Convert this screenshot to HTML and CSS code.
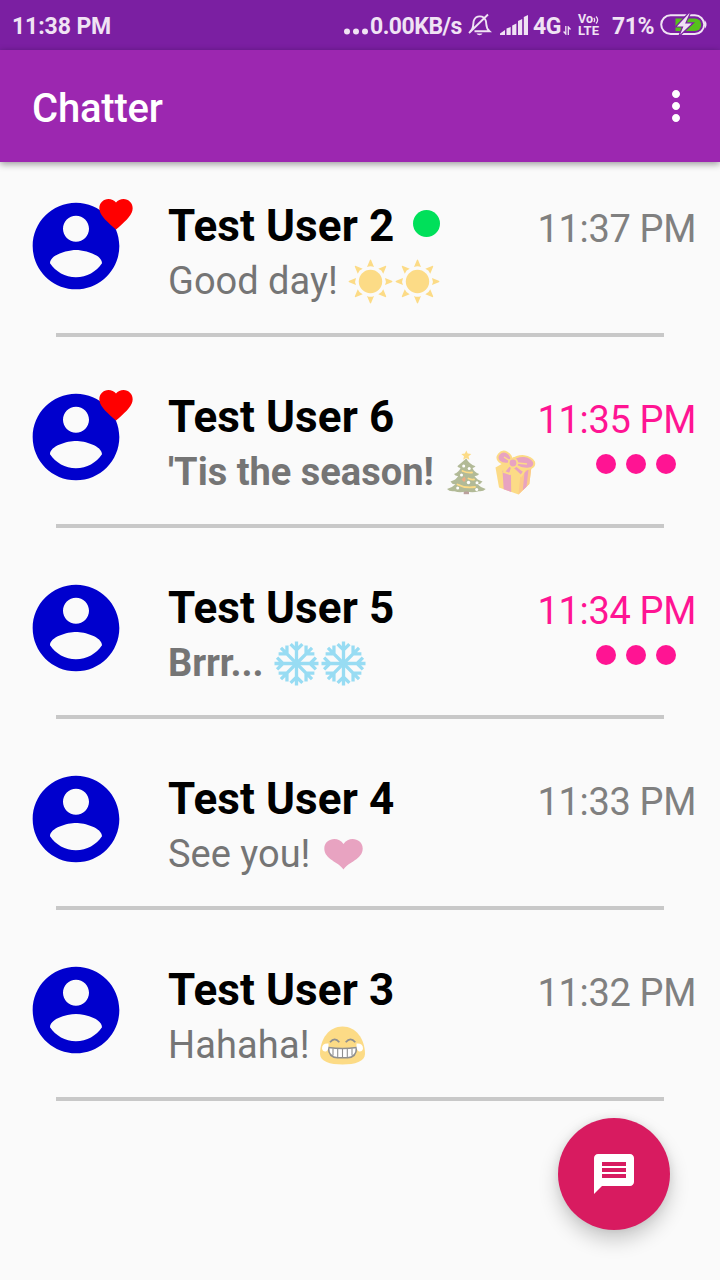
FILE: index.html
```html
<!DOCTYPE html>
<html lang="en">
<head>
<meta charset="utf-8">
<title>Chatter</title>
<link rel="stylesheet" href="styles.css">
</head>
<body>
<svg class="defs" aria-hidden="true">
  <symbol id="account" viewBox="0 0 24 24"><path d="M12 2C6.48 2 2 6.48 2 12s4.48 10 10 10 10-4.48 10-10S17.52 2 12 2zm0 3c1.66 0 3 1.34 3 3s-1.34 3-3 3-3-1.34-3-3 1.34-3 3-3zm0 14.2c-2.5 0-4.71-1.28-6-3.22.03-1.99 4-3.08 6-3.08 1.99 0 5.97 1.09 6 3.08-1.29 1.94-3.5 3.22-6 3.22z"/></symbol>
  <symbol id="favorite" viewBox="0 0 24 24"><path d="M12 21.35l-1.45-1.32C5.4 15.36 2 12.28 2 8.5 2 5.42 4.42 3 7.5 3c1.74 0 3.41.81 4.5 2.09C13.09 3.81 14.76 3 16.5 3 19.58 3 22 5.42 22 8.5c0 3.78-3.4 6.86-8.55 11.54L12 21.35z"/></symbol>
  <symbol id="sun" viewBox="-23.5 -23.5 47 47">
    <g fill="#fcdb86"><circle r="11.7"/>
      <path id="ray" d="M-3.5-14.5L-.7-21.300Q0-22.800.7-21.300L3.500-14.500Q0-16.200-3.500-14.500z"/>
      <use href="#ray" transform="rotate(45)"/><use href="#ray" transform="rotate(90)"/><use href="#ray" transform="rotate(135)"/><use href="#ray" transform="rotate(180)"/><use href="#ray" transform="rotate(225)"/><use href="#ray" transform="rotate(270)"/><use href="#ray" transform="rotate(315)"/></g>
  </symbol>
  <symbol id="snow" viewBox="-23.5 -23.5 47 47">
    <g fill="none" stroke="#98dcf3" stroke-width="3.3" stroke-linecap="butt">
      <path id="arm" d="M0 0V-22M-5.900-19.400L0-13.500L5.900-19.400"/>
      <use href="#arm" transform="rotate(45)"/><use href="#arm" transform="rotate(90)"/><use href="#arm" transform="rotate(135)"/><use href="#arm" transform="rotate(180)"/><use href="#arm" transform="rotate(225)"/><use href="#arm" transform="rotate(270)"/><use href="#arm" transform="rotate(315)"/></g>
  </symbol>
</svg>

<header class="status">
  <span class="status-clock">11:38 PM</span>
  <svg class="more-notes" viewBox="0 0 24 7" fill="currentColor"><circle cx="3" cy="3.5" r="3"/><circle cx="12" cy="3.5" r="3"/><circle cx="21" cy="3.5" r="3"/></svg>
  <span class="status-speed">0.00KB/s</span>
  <svg class="bell" viewBox="0 0 24 24" fill="none" stroke="currentColor" stroke-width="1.900"><path d="M2.300 18.300C6.500 15 4.600 10 6 7.200A6.300 6.300 0 0 1 17.700 7.500C19 11 17 14.500 21.500 18.300H6.500M1 20L20 1.500"/><path d="M8.500 20.500a3.200 2.500 0 0 0 6 0z" fill="currentColor" stroke="none"/></svg>
  <svg class="signal" viewBox="0 0 28 20" fill="currentColor"><path d="M0 20v-1.500L5 15V20zM6.500 13.500l4.200-1.500V20H6.500zM12.200 10.500l4.200-2V20h-4.200zM18 6l4.200-2V20H18zM23.800 2L28 0V20h-4.200z"/></svg>
  <span class="status-net">4G</span>
  <svg class="arrows" viewBox="0 0 8 9" fill="none" stroke="currentColor" stroke-width="1.300"><path d="M2.800 0V8L.6 5.500M5.300 9V1L7.500 3.500"/></svg>
  <span class="volte"><span class="vo">Vo<svg class="waves" viewBox="0 0 6 8" fill="none" stroke="currentColor" stroke-width="1.200"><path d="M.8 2Q2.500 4 .8 6M3 .5Q6.300 4 3 7.500"/></svg></span><span class="lte">LTE</span></span>
  <span class="status-pct">71%</span>
  <svg class="battery" viewBox="0 0 48 24"><rect x="1.200" y="2.200" width="43" height="18.800" rx="9.400" fill="none" stroke="#f0e3f4" stroke-width="2"/><path d="M45 7.500q3 4 0 8z" fill="#f0e3f4"/><path d="M15.500 5.500H35a6.200 6.200 0 0 1 0 12.500H15.500z" fill="#56c11c"/><path d="M28.500 0L15.500 14h7L18.500 24 33.500 9.800h-7.500L30.500 0z" fill="#f0e3f4" stroke="#7b1fa2" stroke-width="1.200"/></svg>
</header>

<nav class="toolbar">
  <h1>Chatter</h1>
  <svg class="menu" viewBox="0 0 24 24" fill="#fff"><path d="M12 8c1.100 0 2-.9 2-2s-.9-2-2-2-2 .9-2 2 .9 2 2 2zm0 2c-1.100 0-2 .9-2 2s.9 2 2 2 2-.9 2-2-.9-2-2-2zm0 6c-1.100 0-2 .9-2 2s.9 2 2 2 2-.9 2-2-.9-2-2-2z"/></svg>
</nav>

<main class="chats">
  <article class="chat">
    <div class="avatar"><svg class="face"><use href="#account"/></svg><svg class="fav"><use href="#favorite"/></svg></div>
    <div class="body">
      <h2>Test User 2<i class="online"></i></h2>
      <p class="msg"><span class="words">Good day! </span><svg class="emoji"><use href="#sun"/></svg><svg class="emoji"><use href="#sun"/></svg></p>
    </div>
    <div class="meta"><time>11:37 PM</time></div>
  </article>

  <article class="chat unread">
    <div class="avatar"><svg class="face"><use href="#account"/></svg><svg class="fav"><use href="#favorite"/></svg></div>
    <div class="body">
      <h2>Test User 6</h2>
      <p class="msg"><span class="words">'Tis the season! </span><svg class="emoji" viewBox="0 0 47 47">
        <path d="M20.700 40h5.300v5.200h-5.300z" fill="#bba19d"/>
        <path d="M23.300 9.500Q26 15 32.500 17.200 31 19 29.500 19 31 23 36.200 25 34 27.500 31.500 27 34 31 39.500 32.500 37.500 35.500 34.500 35.300 37.500 38.500 42.700 40 40 43 35.500 42.200 29 44.500 23.300 42.200 17 44.500 11.500 42.200 6.500 43 4 40 9.500 38.500 12.500 35.300 9 35.500 7.500 32.500 13 31 15.200 27 12.500 27.500 11 25 16 23 17.500 19 15.500 19 14.300 17.200 21 15z" fill="#b2ba97"/>
        <g fill="none" stroke="#fcdb86" stroke-width="1.900" stroke-linecap="round"><path d="M19.500 22Q24 24 29 23.500M25.500 29.500Q29 31 31 30.500M14.500 35.500Q22 39.500 32 38"/></g>
        <path d="M21.500 27.500L18.500 30.500 21 33Q24 31 21.500 27.500z" fill="#ecac84"/>
        <g fill="#fff"><circle cx="20.700" cy="17" r="1.500"/><circle cx="26.200" cy="19.500" r="1.500"/><circle cx="18.500" cy="26" r="1.500"/><circle cx="25.500" cy="33.500" r="1.700"/><circle cx="34" cy="33.800" r="1.500"/><circle cx="14.700" cy="39" r="1.500"/><circle cx="33.700" cy="40.500" r="1.500"/></g>
        <path d="M23.300 1.500l1.400 3 3.600.4-2.700 2.300.8 3.600-3.100-1.900-3.100 1.900.8-3.600-2.700-2.300 3.600-.4z" fill="#fcdb86"/>
      </svg><svg class="emoji" viewBox="0 0 47 47">
        <path d="M5.500 18.500L24 8 41.500 17.500 39.300 35 28.500 45.500 9 38.500z" fill="#fcdb86"/>
        <path d="M30.500 25L41.500 17.500 39.300 35 28.500 45.500z" fill="#fcc98a"/>
        <path d="M12.500 21.500L21 24.500 21.200 43 13.700 40.300zM34.500 23.500L38.500 20.500 36.500 37.700 32.800 41.300zM27 8.500L34 9.500 27 14z" fill="#e8a3c1"/>
        <path d="M21 14C10 17 5 10 9 5 14-1 21 5 22 11 29 5 40 6 44 13 46 20 35 22 26 16.500L34 22.500 31 27 22 18.500 20 25 14 23z" fill="#e8a3c1" stroke="#fcdb86" stroke-width="2"/>
        <path d="M20 12L14 8M27 14L37 15" stroke="#fcdb86" stroke-width="1.500"/><circle cx="23" cy="14" r="4.300" fill="#e8a3c1" stroke="#fcdb86" stroke-width="1.800"/>
      </svg></p>
    </div>
    <div class="meta"><time>11:35 PM</time><div class="dots"><i></i><i></i><i></i></div></div>
  </article>

  <article class="chat unread">
    <div class="avatar"><svg class="face"><use href="#account"/></svg></div>
    <div class="body">
      <h2>Test User 5</h2>
      <p class="msg"><span class="words tight">Brrr... </span><svg class="emoji"><use href="#snow"/></svg><svg class="emoji"><use href="#snow"/></svg></p>
    </div>
    <div class="meta"><time>11:34 PM</time><div class="dots"><i></i><i></i><i></i></div></div>
  </article>

  <article class="chat">
    <div class="avatar"><svg class="face"><use href="#account"/></svg></div>
    <div class="body">
      <h2>Test User 4</h2>
      <p class="msg"><span class="words">See you! </span><svg class="emoji" viewBox="0 0 47 47"><path d="M23.500 38.500C19 31 4.300 28.500 4.300 17.500 4.300 7.500 18 4.500 23.500 13 29 4.500 42.700 7.500 42.700 17.500 42.700 28.500 28 31 23.500 38.500z" fill="#e8a3c1"/></svg></p>
    </div>
    <div class="meta"><time>11:33 PM</time></div>
  </article>

  <article class="chat">
    <div class="avatar"><svg class="face"><use href="#account"/></svg></div>
    <div class="body">
      <h2>Test User 3</h2>
      <p class="msg"><span class="words loose">Hahaha! </span><svg class="emoji" viewBox="0 0 47 47">
        <path d="M23.500 4.500C37 4.500 46 17 46 32 46 39.500 36 42.500 23.500 42.500S1 39.500 1 32C1 17 10 4.500 23.500 4.500z" fill="#fcdb86"/>
        <path d="M11 20.300Q15.700 14.500 20.300 20.300M26.700 20.300Q31.500 14.500 36.300 20.300" fill="none" stroke="#909090" stroke-width="1.700"/>
        <path d="M9.500 25.500Q23.500 27.500 37.500 25.500 37.500 35.500 28.500 35.700H18.500Q9.500 35.500 9.500 25.500z" fill="#fff" stroke="#909090" stroke-width="1.600"/>
        <path d="M14 26.500V33.500M18.700 27V35.500M23.500 27V35.500M28.300 27V35.500M33 26.500V33.500" stroke="#909090" stroke-width="1.100"/>
        <path d="M9.500 21.500Q3 21 3 26.500 3.500 30 7 29.500 10 28 9.500 21.500zM37.500 21.500Q44 21 44 26.500 43.500 30 40 29.500 37 28 37.500 21.500z" fill="#fff"/>
      </svg></p>
    </div>
    <div class="meta"><time>11:32 PM</time></div>
  </article>
</main>

<button class="fab" aria-label="New message"><svg viewBox="0 0 24 24" fill="#fff"><path d="M20 2H4c-1.100 0-1.990.9-1.990 2L2 22l4-4h14c1.100 0 2-.9 2-2V4c0-1.100-.9-2-2-2zm-2 12H6v-2h12v2zm0-3H6V9h12v2zm0-3H6V6h12v2z"/></svg></button>
</body>
</html>
```

FILE: styles.css
```css
* { box-sizing: border-box; }
body {
  margin: 0;
  width: 720px;
  height: 1280px;
  overflow: hidden;
  position: relative;
  background: #fafafa;
  font-family: Roboto, sans-serif;
}
h1, h2, p { margin: 0; }
svg { display: block; flex: none; }
.defs { position: absolute; width: 0; height: 0; }

/* status bar */
.status {
  display: flex;
  align-items: flex-start;
  height: 50px;
  padding: 0 12px;
  background: #7b1fa2;
  color: #f0e3f4;
  font-size: 23px;
  font-weight: 700;
  line-height: 26px;
  white-space: nowrap;
}
.status > span { flex: none; margin-top: 14px; }
.status-clock { width: 332px; letter-spacing: -.1px; }
.more-notes { width: 24px; height: 7px; margin-top: 28px; }
.status-speed { width: 94px; margin-left: 2px; letter-spacing: -.5px; }
.bell { width: 24px; height: 24px; margin: 13px 0 0 4px; }
.signal { width: 28px; height: 20px; margin: 15px 0 0 8px; }
.status-net { width: 30px; margin-left: 5px; letter-spacing: -.4px; }
.arrows { width: 8px; height: 9px; margin-top: 26px; }
.status > .volte {
  display: flex;
  flex-direction: column;
  width: 24px;
  margin: 13px 0 0 7px;
  font-size: 13px;
  line-height: 12px;
}
.vo { display: flex; height: 12px; font-size: 12.500px; }
.waves { width: 6px; height: 8px; margin-top: 3px; }
.status-pct { width: 46px; margin-left: 10px; letter-spacing: -.5px; }
.battery { width: 48px; height: 24px; margin: 13px 0 0 2px; }

/* app bar */
.toolbar {
  display: flex;
  align-items: center;
  justify-content: space-between;
  height: 112px;
  padding: 0 20px 0 32px;
  background: #9c27b0;
  box-shadow: 0 2px 7px rgba(0, 0, 0, .4);
}
.toolbar h1 {
  padding-top: 6px;
  color: #fff;
  font-size: 40px;
  font-weight: 500;
  line-height: 48px;
  letter-spacing: -.2px;
}
.menu { width: 48px; height: 48px; }

/* conversations */
.chats { display: flex; flex-direction: column; gap: 16px; }
.chat {
  display: flex;
  height: 175px;
  background: linear-gradient(#c8c8c8, #c8c8c8) 56px 100% / 608px 4px no-repeat;
}
.avatar { position: relative; width: 168px; padding: 32px 0 0 24px; flex: none; }
.face { width: 104px; height: 104px; fill: #0000cd; }
.fav { position: absolute; left: 96px; top: 32px; width: 40px; height: 40px; fill: #f00; }
.body { flex: 1; min-width: 0; padding-top: 38px; white-space: nowrap; }
.body h2 {
  display: flex;
  color: #000;
  font-size: 44px;
  font-weight: 700;
  line-height: 52px;
  letter-spacing: .1px;
}
.online { width: 27px; height: 27px; margin: 10px 0 0 18.500px; border-radius: 50%; background: #00e05a; }
.msg {
  display: flex;
  align-items: center;
  height: 44px;
  margin-top: 7px;
  color: #757575;
  font-size: 38px;
  line-height: 44px;
}
.words { white-space: pre; }
.tight { letter-spacing: -.12px; }
.loose { letter-spacing: .12px; }
.emoji { width: 47px; height: 47px; }
.meta { flex: none; padding: 45px 24px 0 0; color: #808080; font-size: 38px; line-height: 44px; letter-spacing: -.35px; }
.meta time { display: block; }
.dots { display: flex; justify-content: flex-end; gap: 10px; margin: 12px 20px 0 0; }
.dots i { width: 20px; height: 20px; border-radius: 50%; background: #ff1493; }
.unread .msg { font-weight: 700; }
.unread .meta { color: #ff1493; }

.fab {
  position: absolute;
  left: 558px;
  top: 1118px;
  display: grid;
  place-items: center;
  width: 112px;
  height: 112px;
  padding: 0;
  border: 0;
  border-radius: 50%;
  background: #d81b60;
  box-shadow: 0 10px 20px rgba(0, 0, 0, .2), 0 0 8px rgba(0, 0, 0, .08);
}
.fab svg { width: 48px; height: 48px; }
```
